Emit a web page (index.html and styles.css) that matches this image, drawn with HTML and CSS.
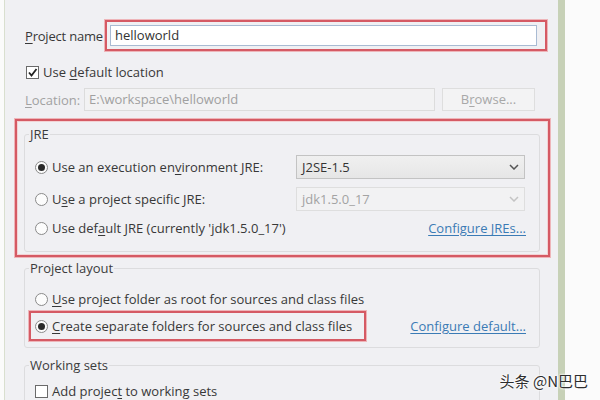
FILE: index.html
```html
<!DOCTYPE html>
<html lang="en">
<head>
  <meta charset="UTF-8" />
  <title>New Java Project</title>
  <link rel="stylesheet" href="styles.css">
</head>
<body>
  <div class="window">
    <!-- Project name -->
    <div class="name-row">
      <span class="lbl name-lbl"><u>P</u>roject name</span>
      <div class="mark name-mark">
        <div class="field">helloworld</div>
      </div>
    </div>

    <div class="check-row">
      <span class="check on">
        <svg width="11" height="11" viewBox="0 0 11 11"><path d="M2 5.5 L4.5 8.5 L9.5 2" fill="none" stroke="#222" stroke-width="1.8"/></svg>
      </span>
      <span>Use <u>d</u>efault location</span>
    </div>

    <div class="loc-row">
      <span class="lbl dim loc-lbl"><u>L</u>ocation:</span>
      <div class="field disabled loc-field">E:\workspace\helloworld</div>
      <div class="btn">B<u>r</u>owse...</div>
    </div>

    <!-- JRE -->
    <div class="mark jre-mark">
      <fieldset class="group jre-group">
        <legend>JRE</legend>
        <div class="opt-row tall">
          <span class="radio on"></span>
          <span class="opt-text">Use an execution en<u>v</u>ironment JRE:</span>
          <div class="select">
            <span>J2SE-1.5</span>
            <svg width="10" height="6" viewBox="0 0 10 6"><path d="M1 1 L5 5 L9 1" fill="none" stroke="#555" stroke-width="1.5"/></svg>
          </div>
        </div>
        <div class="opt-row tall">
          <span class="radio"></span>
          <span class="opt-text">U<u>s</u>e a project specific JRE:</span>
          <div class="select disabled">
            <span>jdk1.5.0_17</span>
            <svg width="10" height="6" viewBox="0 0 10 6"><path d="M1 1 L5 5 L9 1" fill="none" stroke="#c4c4c4" stroke-width="1.5"/></svg>
          </div>
        </div>
        <div class="opt-row">
          <span class="radio"></span>
          <span class="opt-text">Use def<u>a</u>ult JRE (currently 'jdk1.5.0_17')</span>
          <a class="link">Configure JREs...</a>
        </div>
      </fieldset>
    </div>

    <!-- Project layout -->
    <fieldset class="group layout-group">
      <legend>Project layout</legend>
      <div class="opt-row">
        <span class="radio"></span>
        <span class="opt-text"><u>U</u>se project folder as root for sources and class files</span>
      </div>
      <div class="layout-bottom">
        <div class="mark create-mark">
          <span class="radio on"></span>
          <span class="opt-text"><u>C</u>reate separate folders for sources and class files</span>
        </div>
        <a class="link">Configure default...</a>
      </div>
    </fieldset>

    <!-- Working sets -->
    <fieldset class="group sets-group">
      <legend>Working sets</legend>
      <div class="opt-row">
        <span class="check"></span>
        <span class="opt-text">Add projec<u>t</u> to working sets</span>
      </div>
    </fieldset>
  </div>

  <div class="watermark">头条 @N巴巴</div>
</body>
</html>
```

FILE: styles.css
```css
* {
  box-sizing: border-box;
}

body {
  margin: 0;
  background: #fbfbfb;
  font-family: "Open Sans", "Noto Sans", sans-serif;
  font-size: 13px;
  color: #383838;
  height: 400px;
  overflow: hidden;
  position: relative;
}

u {
  text-decoration-thickness: 1px;
  text-underline-offset: 2px;
}

.window {
  margin-left: 4px;
  width: 561px;
  height: 400px;
  padding-top: 20px;
  background: #f0f0f3;
  border-left: 1px solid #d9dfcf;
  border-right: 7px solid #c7d1b7;
  overflow: hidden;
}

.mark {
  border: 2px solid #d55a64;
  box-shadow: 0 0 0 1px #eeb5b9;
}

.lbl {
  flex: none;
  white-space: nowrap;
}

.dim {
  color: #a2a2a2;
}

/* Project name */
.name-row {
  display: flex;
  align-items: center;
  margin-left: 20px;
  height: 31px;
}

.name-lbl {
  width: 80px;
  letter-spacing: -0.2px;
}

.name-mark {
  width: 442px;
  height: 31px;
  display: flex;
  align-items: center;
  padding-left: 3px;
}

.field {
  width: 427px;
  height: 21px;
  background: #fff;
  border: 1px solid #a9bbd3;
  padding-left: 4px;
  line-height: 19px;
  color: #333;
}

.field.disabled {
  background: #f2f2f3;
  border-color: #dcdcdc;
  color: #a0a0a0;
}

/* default location */
.check-row {
  display: flex;
  align-items: center;
  gap: 4px;
  margin: 11px 0 0 21px;
  height: 20px;
}

.check {
  width: 13px;
  height: 13px;
  border: 1px solid #6a6a6a;
  background: #fff;
  display: flex;
  align-items: center;
  justify-content: center;
  flex: none;
}

.loc-row {
  display: flex;
  align-items: center;
  margin: 6px 0 0 20px;
  height: 23px;
}

.loc-lbl {
  width: 59px;
}

.loc-field {
  width: 351px;
  height: 23px;
  line-height: 21px;
}

.btn {
  margin-left: 7px;
  width: 93px;
  height: 23px;
  border: 1px solid #dedede;
  background: #f3f3f4;
  color: #a8a8a8;
  text-align: center;
  line-height: 21px;
}

/* group boxes */
.group {
  margin: 0;
  border: 1px solid #dcdcde;
  border-radius: 3px;
  padding: 0 13px 0 4px;
}

.group legend {
  padding: 0 1px;
  line-height: 16px;
  color: #3c3c3c;
}

.opt-row {
  display: flex;
  align-items: center;
  height: 18px;
  padding-left: 6px;
}

.opt-row.tall {
  height: 24px;
  margin-bottom: 8px;
}

.radio {
  width: 13px;
  height: 13px;
  border: 1px solid #8a8a8a;
  border-radius: 50%;
  background: #fcfcfc;
  flex: none;
  margin-right: 4px;
  position: relative;
}

.radio.on::after {
  content: "";
  position: absolute;
  left: 2px;
  top: 2px;
  width: 7px;
  height: 7px;
  border-radius: 50%;
  background: #2a2a2a;
}

.opt-text {
  white-space: nowrap;
}

.link {
  margin-left: auto;
  color: #3b7bb5;
  text-decoration: underline;
  text-underline-offset: 2px;
  white-space: nowrap;
}

/* JRE */
.jre-mark {
  margin: 8px 0 0 10px;
  width: 535px;
  height: 138px;
  padding: 5px 8px 0 7px;
  box-shadow: 0 0 0 1px #eeb5b9, inset 0 0 0 1px #f3d2d4;
}

.jre-group {
  width: 516px;
  height: 126px;
  padding-top: 13px;
}

.jre-group .opt-text {
  width: 244px;
}

.jre-group .opt-row:last-child .opt-text {
  width: auto;
}

.select {
  width: 229px;
  height: 24px;
  border: 1px solid #c3c3c3;
  background: linear-gradient(#f0f0f0, #e6e6e6);
  display: flex;
  align-items: center;
  justify-content: space-between;
  padding: 0 5px 0 5px;
  color: #333;
}

.select.disabled {
  background: #f2f2f3;
  border-color: #dedede;
  color: #a3a3a3;
}

/* Project layout */
.layout-group {
  margin: 3px 0 0 19px;
  width: 516px;
  height: 88px;
  padding-top: 14px;
}

.layout-bottom {
  display: flex;
  align-items: center;
  margin-top: 3px;
}

.create-mark {
  width: 337px;
  height: 30px;
  display: flex;
  align-items: center;
  padding-left: 4px;
}

/* Working sets */
.sets-group {
  margin: 9px 0 0 19px;
  width: 516px;
  height: 80px;
  padding-top: 9px;
}

.sets-group .check {
  margin-right: 4px;
}

.watermark {
  position: absolute;
  right: 12px;
  top: 370px;
  font-family: "Noto Sans CJK SC", sans-serif;
  font-size: 15px;
  color: #2e2e2e;
  text-shadow: 0 0 2px #fff, 0 0 2px #fff, 0 0 3px #fff;
}
```
